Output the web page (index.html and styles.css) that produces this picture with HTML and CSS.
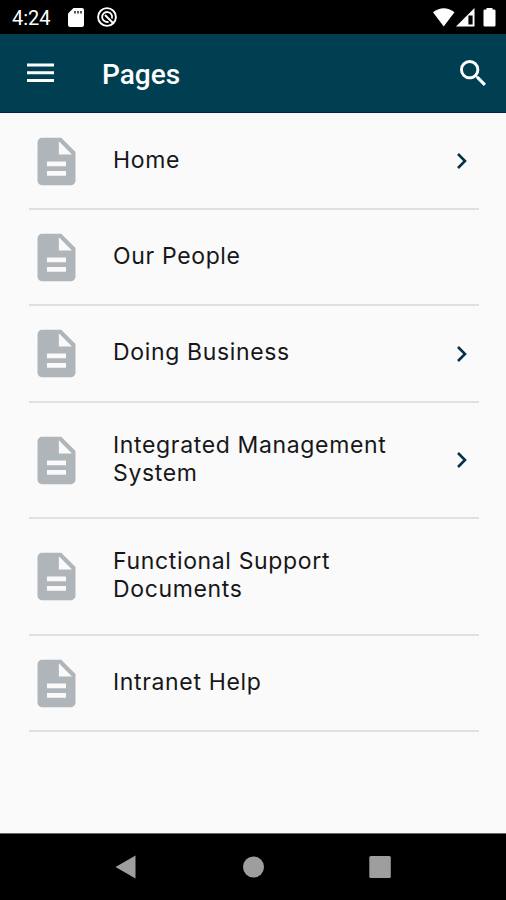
FILE: index.html
```html
<!DOCTYPE html>
<html lang="en">
<head>
<meta charset="utf-8">
<title>Pages</title>
<link rel="stylesheet" href="styles.css">
</head>
<body>
<svg class="defs" width="0" height="0" aria-hidden="true">
  <symbol id="doc" viewBox="0 0 24 24"><path d="M14 2H6c-1.100 0-1.990.9-1.990 2L4 20c0 1.100.89 2 1.990 2H18c1.100 0 2-.9 2-2V8l-6-6zm2 16H8v-2h8v2zm0-4H8v-2h8v2zm-3-5V3.500L18.500 9H13z"/></symbol>
  <symbol id="chevron" viewBox="0 0 12 18"><path d="M2 2l7 7-7 7" fill="none" stroke="#06304a" stroke-width="2.600"/></symbol>
</svg>
<div class="status">
  <span class="time">4:24</span>
  <svg class="sd" viewBox="0 0 16 19"><path d="M5.500 0H14a2 2 0 0 1 2 2v15a2 2 0 0 1-2 2H2a2 2 0 0 1-2-2V5.500z" fill="#fff"/><path d="M7 3v2.500M10 3v2.500M13 3v2.500" stroke="#000" stroke-width="1.300"/></svg>
  <svg class="sync" viewBox="0 0 20 20" fill="none" stroke="#fff"><circle cx="10" cy="10" r="8.900" stroke-width="1.900"/><path d="M11.500 14.800A5 5 0 1 1 14.900 11.500" stroke-width="1.800"/><path d="M8 8l8.500 8.500" stroke-width="2"/></svg>
  <svg class="signals" viewBox="0 0 64 20" fill="#fff"><path d="M0 4.200Q10.700-3.600 21.500 4.200L10.700 18.500z"/><path fill-rule="evenodd" d="M41.500 0v18.500H23zM39.600 7.500h-4.200v9h4.200z"/><path d="M53.500 1.500V0h6v1.500h1.700a1.300 1.300 0 0 1 1.300 1.300v14.400a1.300 1.300 0 0 1-1.300 1.300h-9.400a1.300 1.300 0 0 1-1.300-1.300V2.800a1.300 1.300 0 0 1 1.300-1.300z"/></svg>
</div>
<header class="bar">
  <svg class="menu" viewBox="0 0 27 20"><path d="M0 2h27M0 9.800h27M0 17.500h27" stroke="#fff" stroke-width="3"/></svg>
  <h1>Pages</h1>
  <svg class="search" viewBox="3 3 17.500 17.500"><path fill="#fff" d="M15.500 14h-.79l-.28-.27A6.471 6.471 0 0 0 16 9.500 6.500 6.500 0 1 0 9.500 16c1.610 0 3.090-.59 4.230-1.570l.27.28v.79l5 4.990L20.490 19l-4.990-5zm-6 0C7.010 14 5 11.990 5 9.500S7.010 5 9.500 5 14 7.010 14 9.500 11.990 14 9.500 14z"/></svg>
</header>
<main class="list">
  <div class="row"><svg class="doc"><use href="#doc"/></svg><span class="label">Home</span><svg class="chev"><use href="#chevron"/></svg></div>
  <div class="row"><svg class="doc"><use href="#doc"/></svg><span class="label">Our People</span></div>
  <div class="row"><svg class="doc"><use href="#doc"/></svg><span class="label">Doing Business</span><svg class="chev"><use href="#chevron"/></svg></div>
  <div class="row tall"><svg class="doc"><use href="#doc"/></svg><span class="label">Integrated Management System</span><svg class="chev"><use href="#chevron"/></svg></div>
  <div class="row tall"><svg class="doc"><use href="#doc"/></svg><span class="label">Functional Support<br>Documents</span></div>
  <div class="row"><svg class="doc"><use href="#doc"/></svg><span class="label">Intranet Help</span></div>
</main>
<nav class="nav">
  <svg viewBox="0 0 24 24"><path d="M1.500 12L21.500.5v23z"/></svg>
  <svg viewBox="0 0 24 24"><circle cx="12.500" cy="12" r="10.500"/></svg>
  <svg viewBox="0 0 24 24"><rect x="1.300" y="1" width="21.500" height="22" rx="1.500"/></svg>
</nav>
</body>
</html>
```

FILE: styles.css
```css
* { box-sizing: border-box; }
body {
  margin: 0;
  height: 900px;
  display: flex;
  flex-direction: column;
  background: #fafafa;
  overflow: hidden;
  font-family: Inter, sans-serif;
}
svg { display: block; flex: none; }
.defs { position: absolute; }
.status {
  height: 34px;
  flex: none;
  background: #000;
  color: #fff;
  display: flex;
  align-items: center;
  padding: 0 9px 0 12px;
}
.time { font: 20px/34px Roboto, sans-serif; width: 56px; padding-top: 2px; }
.sd { width: 16px; height: 19px; }
.sync { width: 20px; height: 20px; margin-left: 13px; }
.signals { width: 64px; height: 20px; margin-left: auto; margin-top: 2px; }
.bar {
  height: 79px;
  flex: none;
  background: #003f52;
  border-bottom: 1px solid #07204a;
  display: flex;
  align-items: center;
  padding: 0 20px 0 27px;
}
.menu { width: 27px; height: 20px; }
h1 {
  margin: 4px 0 0 48px;
  color: #fff;
  font: 500 28px/32px Roboto, sans-serif;
  flex: 1;
}
.search { width: 26px; height: 26px; }
.list { flex: 1; padding: .5px 27px 0 29px; }
.row {
  height: 96.400px;
  display: flex;
  align-items: center;
  border-bottom: 2px solid #e0e0e1;
}
.row.tall { height: 116.500px; }
.doc { width: 57px; height: 57px; margin: 1px 0 0 -1px; fill: #b0b5ba; }
.label {
  width: 290px;
  margin-left: 28px;
  padding-bottom: 2px;
  font-size: 23px;
  line-height: 28px;
  letter-spacing: .65px;
  color: #171719;
}
.chev { width: 12px; height: 18px; margin: 1px 0 0 53px; }
.nav {
  height: 67px;
  flex: none;
  background: #000;
  border-top: 1px solid #666;
  display: flex;
  justify-content: space-between;
  align-items: center;
  padding: 0 114px;
  fill: #9e9e9e;
}
.nav svg { width: 24px; height: 24px; }
```
